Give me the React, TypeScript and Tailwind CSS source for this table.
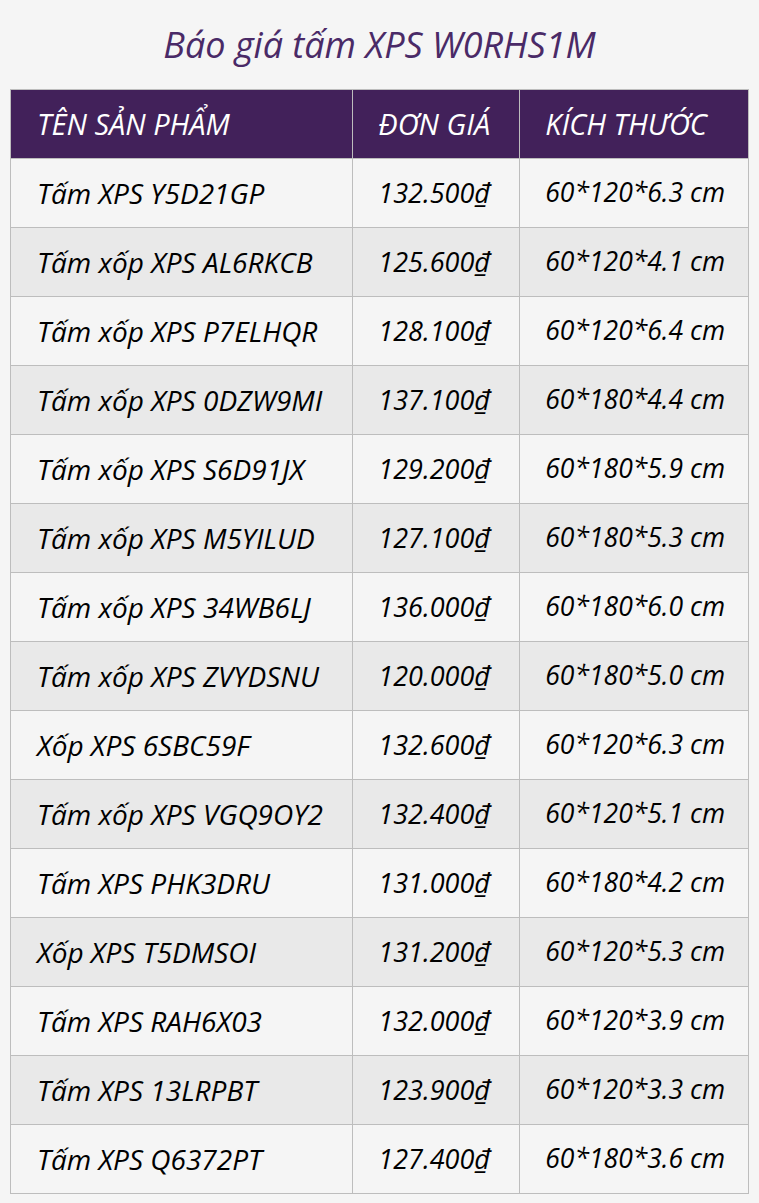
import React from 'react';

interface Row {
  name: string;
  price: string;
  size: string;
}

const rows: Row[] = [
  { name: 'Tấm XPS Y5D21GP', price: '132.500₫', size: '60*120*6.3 cm' },
  { name: 'Tấm xốp XPS AL6RKCB', price: '125.600₫', size: '60*120*4.1 cm' },
  { name: 'Tấm xốp XPS P7ELHQR', price: '128.100₫', size: '60*120*6.4 cm' },
  { name: 'Tấm xốp XPS 0DZW9MI', price: '137.100₫', size: '60*180*4.4 cm' },
  { name: 'Tấm xốp XPS S6D91JX', price: '129.200₫', size: '60*180*5.9 cm' },
  { name: 'Tấm xốp XPS M5YILUD', price: '127.100₫', size: '60*180*5.3 cm' },
  { name: 'Tấm xốp XPS 34WB6LJ', price: '136.000₫', size: '60*180*6.0 cm' },
  { name: 'Tấm xốp XPS ZVYDSNU', price: '120.000₫', size: '60*180*5.0 cm' },
  { name: 'Xốp XPS 6SBC59F', price: '132.600₫', size: '60*120*6.3 cm' },
  { name: 'Tấm xốp XPS VGQ9OY2', price: '132.400₫', size: '60*120*5.1 cm' },
  { name: 'Tấm XPS PHK3DRU', price: '131.000₫', size: '60*180*4.2 cm' },
  { name: 'Xốp XPS T5DMSOI', price: '131.200₫', size: '60*120*5.3 cm' },
  { name: 'Tấm XPS RAH6X03', price: '132.000₫', size: '60*120*3.9 cm' },
  { name: 'Tấm XPS 13LRPBT', price: '123.900₫', size: '60*120*3.3 cm' },
  { name: 'Tấm XPS Q6372PT', price: '127.400₫', size: '60*180*3.6 cm' },
];

const font = { fontFamily: '"Open Sans", "Noto Sans", sans-serif' };

export default function App() {
  return (
    <div className="min-h-[1203px] bg-[#f5f5f5] px-[10px] pt-[20px]" style={font}>
      <h1 className="text-center text-[36px] italic leading-[50px] text-[#4a2a67]">
        Báo giá tấm XPS W0RHS1M
      </h1>
      <table className="mt-[19px] w-[739px] border-collapse italic text-[27px] text-black">
        <colgroup>
          <col className="w-[343px]" />
          <col className="w-[167px]" />
          <col className="w-[229px]" />
        </colgroup>
        <thead>
          <tr className="h-[69px] bg-[#42215a] text-[29px] text-white">
            <th className="border border-[#bdbdbd] pl-[26px] text-left font-normal">TÊN SẢN PHẨM</th>
            <th className="border border-[#bdbdbd] pl-[25px] text-left font-normal">ĐƠN GIÁ</th>
            <th className="border border-[#bdbdbd] pl-[25px] text-left font-normal">KÍCH THƯỚC</th>
          </tr>
        </thead>
        <tbody>
          {rows.map((r, i) => (
            <tr key={i} className={`h-[69px] ${i % 2 === 0 ? 'bg-[#f5f5f5]' : 'bg-[#e9e9e9]'}`}>
              <td className="border border-[#bdbdbd] pl-[26px] text-[28px]">{r.name}</td>
              <td className="border border-[#bdbdbd] pl-[25px]">{r.price}</td>
              <td className="border border-[#bdbdbd] pl-[25px] text-[26.5px]">{r.size}</td>
            </tr>
          ))}
        </tbody>
      </table>
    </div>
  );
}
